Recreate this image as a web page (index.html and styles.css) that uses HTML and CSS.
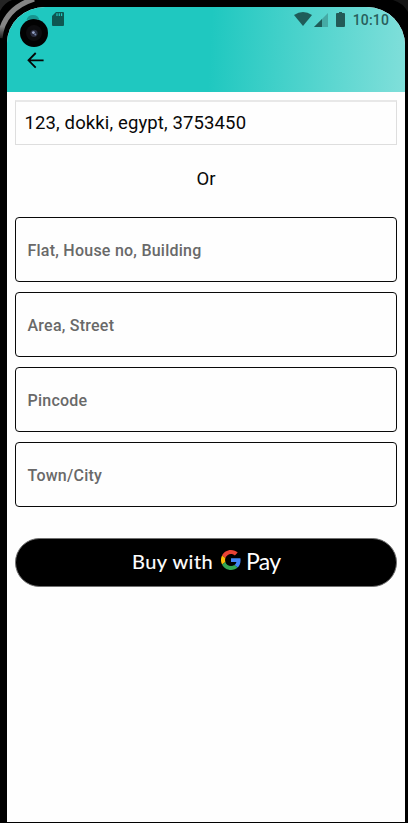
FILE: index.html
```html
<!DOCTYPE html>
<html lang="en">
<head>
<meta charset="utf-8">
<title>Address</title>
<link rel="stylesheet" href="styles.css">
</head>
<body>
<div class="device">
  <svg class="bezel" width="408" height="120" viewBox="0 0 408 120">
    <defs><linearGradient id="metal" x1="0" y1="0" x2="0" y2="1"><stop offset="0" stop-color="#858585"/><stop offset=".7" stop-color="#858585"/><stop offset="1" stop-color="#222"/></linearGradient></defs>
    <path d="M0 0H12Q4 3 0 11Z" fill="#242424"/>
    <path d="M0 38C2 19 12 6 34-1" fill="none" stroke="url(#metal)" stroke-width="5"/>
    <path d="M393 0Q403 3 408 12V0Z" fill="#151515"/>
  </svg>
  <main class="screen">
    <header class="header">
      <div class="status">
        <svg class="sd" width="12" height="14" viewBox="0 0 12 14"><path d="M4 0H11Q12 0 12 1V13Q12 14 11 14H1Q0 14 0 13V4Z" fill="#0e5752"/><path d="M5 1.2V4M7.3 1.2V4M9.6 1.2V4" stroke="#1fc8c0" stroke-width="1.2"/></svg>
        <svg class="wifi" width="18" height="14" viewBox="0 0 18 14"><path d="M0 3Q9-3 18 3L9 14Z" fill="#1f5c59"/></svg>
        <svg class="signal" width="14" height="14" viewBox="0 0 14 14"><path d="M14 0V14H0Z" fill="#45aaa5"/><path d="M8 6V14H0Z" fill="#1f5c59"/></svg>
        <svg class="battery" width="9" height="15" viewBox="0 0 9 15"><path d="M3 0H6V1H8Q9 1 9 2V14Q9 15 8 15H1Q0 15 0 14V2Q0 1 1 1H3Z" fill="#235a57"/></svg>
        <span class="clock">10:10</span>
      </div>
      <svg class="back" width="18" height="17" viewBox="0 0 18 17"><path d="M8.7 1L1.5 8.3L8.7 15.6M1.5 8.3H16.6" fill="none" stroke="#050505" stroke-width="1.8"/></svg>
      <svg class="camera" width="28" height="34" viewBox="0 0 28 34"><circle cx="13" cy="12" r="6.8" fill="#17958f"/><circle cx="13" cy="12" r="5.3" fill="none" stroke="#18aaa4" stroke-width="1" stroke-dasharray="1 1"/><circle cx="14" cy="20" r="14" fill="#020202"/><circle cx="14" cy="20" r="8" fill="#0c0c0e"/><circle cx="14" cy="20.3" r="3.6" fill="#292b3c"/><circle cx="13.4" cy="19.6" r="1.4" fill="#99a7cb"/><circle cx="15.3" cy="21.5" r="1" fill="#7283a8"/><path d="M6.4 7.2A6.8 6.8 0 0 1 19.6 7.2Q13 4.6 6.4 7.2Z" fill="#17958f"/></svg>
    </header>
    <section class="content">
      <div class="address"><span>123, dokki, egypt, 3753450</span></div>
      <div class="or">Or</div>
      <div class="fields">
        <div class="field">Flat, House no, Building</div>
        <div class="field">Area, Street</div>
        <div class="field">Pincode</div>
        <div class="field">Town/City</div>
      </div>
      <button class="pay" type="button">
        <span class="buy">Buy with</span>
        <svg class="google" width="20" height="20" viewBox="0 0 48 48"><path fill="#EA4335" d="M24 9.5c3.54 0 6.71 1.22 9.21 3.6l6.85-6.85C35.9 2.38 30.47 0 24 0 14.62 0 6.51 5.38 2.56 13.22l7.98 6.19C12.43 13.72 17.74 9.5 24 9.5z"/><path fill="#4285F4" d="M46.98 24.55c0-1.57-.15-3.09-.38-4.55H24v9.02h12.94c-.58 2.96-2.26 5.48-4.78 7.18l7.73 6c4.51-4.18 7.09-10.36 7.09-17.65z"/><path fill="#FBBC05" d="M10.53 28.59A14.5 14.5 0 0 1 10.53 19.41l-7.98-6.19a24 24 0 0 0 0 21.56l7.98-6.19z"/><path fill="#34A853" d="M24 48c6.48 0 11.93-2.13 15.89-5.81l-7.73-6c-2.15 1.45-4.92 2.3-8.16 2.3-6.26 0-11.57-4.22-13.47-9.91l-7.98 6.19C6.51 42.62 14.62 48 24 48z"/></svg>
        <span class="brand">Pay</span>
      </button>
    </section>
  </main>
</div>
</body>
</html>
```
FILE: styles.css
```css
* { box-sizing: border-box; }
body { margin: 0; background: #000; font-family: Roboto, sans-serif; }
svg { display: block; flex: none; }
.device { position: relative; width: 408px; height: 823px; padding: 7px 3px 1px 7px; background: #000; overflow: hidden; }
.bezel { position: absolute; left: 0; top: 0; }
.screen { position: relative; height: 815px; background: #fefefe; border-radius: 38px 38px 0 0 / 36px 38px 0 0; overflow: hidden; }
.header { position: relative; height: 85px; background: linear-gradient(93deg, #1fc8c0 51%, #80dfda 100%); }
.status { display: flex; align-items: flex-start; height: 45px; padding: 5px 16px 0 45px; }
.wifi { margin-left: auto; }
.signal { margin-left: 2px; margin-top: 1px; }
.battery { margin-right: 1px; margin-left: 8px; }
.clock { margin-left: 7px; font-size: 14px; font-weight: 500; line-height: 17px; letter-spacing: .15px; color: #285f5c; }
.back { margin-left: 20px; }
.camera { position: absolute; left: 13px; top: 6px; }
.content { padding: 8px; }
.address { display: flex; align-items: center; height: 45px; padding: 0 0 0 8.5px; border: 1px solid #dedede; border-top-width: 2px; border-top-color: #e8e8e8; color: #080808; font-size: 18.5px; letter-spacing: .13px; }
.or { margin-top: 22px; height: 22px; line-height: 24px; text-align: center; font-size: 18.5px; color: #080808; }
.fields { display: grid; gap: 10px; margin-top: 28px; }
.field { display: flex; align-items: center; height: 65px; padding: 1px 0 0 11.5px; border: 1px solid #090909; border-radius: 4px; color: #696969; font-size: 16px; font-weight: 500; letter-spacing: .24px; }
.pay { display: flex; align-items: center; width: 100%; height: 49px; margin-top: 31px; padding: 0 0 4px 116px; border: 1px solid #707070; border-radius: 25px; background: #000; color: #fff; font-family: Lato, sans-serif; }
.buy { width: 82px; font-size: 20px; letter-spacing: .5px; white-space: nowrap; text-align: left; -webkit-text-stroke: .15px #fff; }
.google { margin-left: 7px; margin-top: -1px; }
.brand { margin-left: 5px; font-size: 23px; letter-spacing: -.7px; }
```
